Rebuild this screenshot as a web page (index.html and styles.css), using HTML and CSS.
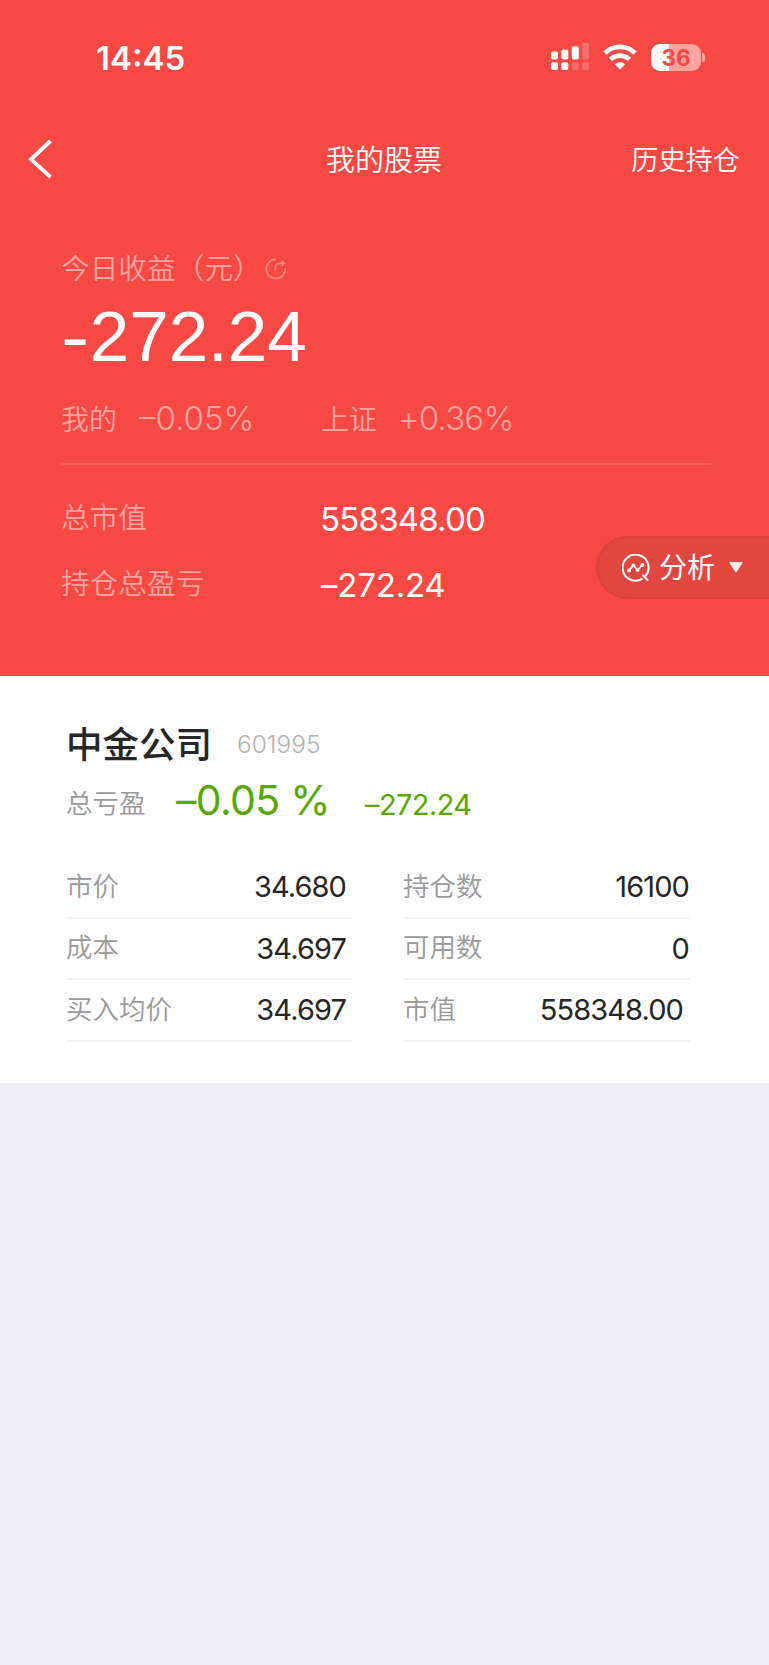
FILE: index.html
```html
<!DOCTYPE html>
<html lang="zh-CN">
<head>
    <meta charset="UTF-8">
    <meta name="viewport" content="width=device-width, initial-scale=1.0">
    <title>我的股票</title>
    <link rel="stylesheet" href="styles.css">
</head>
<body>
    <div class="hero">
        <!-- Status bar -->
        <div class="status-bar">
            <span class="time">14:45</span>
            <svg class="signal" width="38" height="28" viewBox="0 0 38 28" fill="#fff">
                <rect x="0" y="8.5" width="7" height="8" rx="2"/>
                <rect x="10.3" y="6.5" width="7" height="10" rx="2"/>
                <rect x="20.8" y="3.3" width="7" height="13.2" rx="2"/>
                <rect x="31" y="0" width="7" height="16.5" rx="2" opacity=".2"/>
                <rect x="0" y="19.3" width="7" height="7.6" rx="2"/>
                <rect x="10.3" y="19.3" width="7" height="7.6" rx="2"/>
                <rect x="20.8" y="19.3" width="7" height="7.6" rx="2" opacity=".2"/>
                <rect x="31" y="19.3" width="7" height="7.6" rx="2" opacity=".2"/>
            </svg>
            <svg class="wifi" width="34" height="26" viewBox="0 0 34 26" fill="none" stroke="#fff" stroke-width="4.8">
                <path d="M2 9.100a21.400 21.400 0 0 1 30 0"/>
                <path d="M7.500 15.400a13.600 13.600 0 0 1 19 0"/>
                <path d="M17 25.500l-5.200-5.300a7.600 7.600 0 0 1 10.400 0z" fill="#fff" stroke="none"/>
            </svg>
            <div class="battery">
                <div class="battery-body">36</div>
                <div class="battery-cap"></div>
            </div>
        </div>

        <!-- Nav -->
        <div class="nav">
            <svg class="back" width="26" height="40" viewBox="0 0 26 40" fill="none" stroke="#fff" stroke-width="3.8">
                <path d="M23.500 2L4 20.300 23.500 38"/>
            </svg>
            <h1 class="nav-title">我的股票</h1>
            <a class="nav-link">历史持仓</a>
        </div>

        <!-- Summary -->
        <div class="summary">
            <div class="today">
                <span>今日收益（元）</span>
                <svg width="22" height="22" viewBox="0 0 22 22" fill="none" stroke="#fff" stroke-width="1.6" opacity=".36">
                    <path d="M10.500 1.400a9.600 9.600 0 1 0 9.900 8.600"/>
                    <path d="M10.500 12.500V9.500q0-4 4-4h3.600"/>
                    <path d="M16.500 3l2.800 2.500-2.800 2.500"/>
                </svg>
            </div>
            <div class="amount"><span class="minus">-</span>272.24</div>
            <div class="compare">
                <div class="compare-item"><span class="compare-label">我的</span><span class="num neg">–0.05%</span></div>
                <div class="compare-item"><span class="compare-label">上证</span><span class="num">+0.36%</span></div>
            </div>
            <div class="total-row"><span class="total-label">总市值</span><span class="num">558348.00</span></div>
            <div class="total-row"><span class="total-label">持仓总盈亏</span><span class="num neg">–272.24</span></div>
        </div>

        <div class="analysis">
            <svg width="28" height="28" viewBox="0 0 28 28" fill="none" stroke="#fff" stroke-width="2">
                <path d="M20.600 24.600a13 13 0 1 1 2.500-2.100M20.500 20.800l5.700 5.700"/>
                <path d="M7 16.500l4.400-5.200 4.200 5 4.800-5.400" stroke-width="1.7"/>
                <g fill="#fff" stroke="none"><circle cx="7" cy="16.5" r="2"/><circle cx="11.4" cy="11.3" r="1.8"/><circle cx="15.6" cy="16.3" r="1.8"/><circle cx="20.4" cy="11" r="2"/></g>
            </svg>
            <span class="analysis-text">分析</span>
            <svg class="caret" width="14" height="11" viewBox="0 0 14 11" fill="#fff" opacity=".9"><path d="M1 0h12q1 0 .5 1L7.600 10q-.6.800-1.200 0L.5 1Q0 0 1 0z"/></svg>
        </div>
    </div>

    <!-- Stock card -->
    <div class="card">
        <div class="stock-head">
            <h2 class="stock-name">中金公司</h2>
            <span class="stock-code">601995</span>
        </div>
        <div class="profit">
            <span class="profit-label">总亏盈</span>
            <span class="profit-rate">–0.05 %</span>
            <span class="profit-value">–272.24</span>
        </div>
        <div class="grid">
            <div class="cell"><span class="label">市价</span><span class="value">34.680</span></div>
            <div class="cell right"><span class="label">持仓数</span><span class="value">16100</span></div>
            <div class="cell"><span class="label">成本</span><span class="value">34.697</span></div>
            <div class="cell right"><span class="label">可用数</span><span class="value">0</span></div>
            <div class="cell"><span class="label">买入均价</span><span class="value">34.697</span></div>
            <div class="cell right wide"><span class="label">市值</span><span class="value">558348.00</span></div>
        </div>
    </div>
</body>
</html>
```
FILE: styles.css
```css
* {
    margin: 0;
    padding: 0;
    box-sizing: border-box;
}

body {
    width: 769px;
    min-height: 1665px;
    background-color: #efeef4;
    font-family: Inter, "Noto Sans CJK SC", sans-serif;
    font-weight: 350;
    color: #262626;
}

.hero {
    position: relative;
    height: 676px;
    background-color: #f74944;
    color: #fff;
}

/* Status bar */
.status-bar {
    display: flex;
    align-items: center;
    height: 114px;
    padding: 0 64px 0 96px;
}

.time {
    flex: 1;
    padding-top: 1px;
    font-size: 33px;
    font-weight: 600;
}

.signal {
    margin-right: 14px;
}

.wifi {
    margin-right: 14px;
}

.battery {
    display: flex;
    align-items: center;
    gap: 1px;
}

.battery-body {
    width: 50px;
    height: 27px;
    border-radius: 9px;
    background: linear-gradient(90deg, #fff 36%, #fda4a1 36%);
    color: #f74944;
    font-size: 22.500px;
    font-weight: 700;
    line-height: 28px;
    text-align: center;
}

.battery-cap {
    width: 3px;
    height: 9px;
    border-radius: 0 3px 3px 0;
    background-color: #fda4a1;
}

/* Nav */
.nav {
    display: grid;
    grid-template-columns: 1fr auto 1fr;
    align-items: center;
    height: 90px;
    padding: 0 28px 0 27px;
}

.nav-title {
    padding-bottom: 2px;
    font-size: 29px;
    font-weight: 350;
}

.nav-link {
    justify-self: end;
    padding: 0 1px 2px 0;
    font-size: 27.200px;
}

/* Summary */
.summary {
    padding: 42px 58px 0 61px;
}

.today {
    display: flex;
    align-items: center;
    gap: 3px;
    height: 40px;
    font-size: 28.700px;
    color: #fda4a1;
}

.today svg {
    margin-top: 5px;
}

.amount {
    height: 90px;
    font-family: "Liberation Sans", Arial, sans-serif;
    font-size: 71px;
    font-weight: 400;
    line-height: 102px;
}

.minus {
    display: inline-block;
    margin-right: 5px;
    transform: scaleX(1.2);
    transform-origin: left;
}

.compare {
    display: flex;
    height: 89px;
    padding-top: 18px;
    border-bottom: 2px solid #f95d57;
    color: #fda4a1;
}

.compare-item {
    display: flex;
    width: 260px;
    height: 48px;
    align-items: center;
    gap: 21px;
}

.compare-label {
    font-size: 28px;
}

.num {
    font-size: 33px;
    letter-spacing: -0.8px;
}

.num.neg {
    padding-left: 1px;
    letter-spacing: 0;
}

.total-row {
    display: flex;
    align-items: center;
    height: 66px;
}

.compare + .total-row {
    margin-top: 21px;
}

.total-label {
    width: 259px;
    padding-bottom: 7px;
    font-size: 28.700px;
    color: #fda4a1;
}

.total-row .num {
    font-weight: 400;
}

.total-row .neg {
    letter-spacing: -0.2px;
}

/* Floating button on the right edge */
.analysis {
    position: absolute;
    top: 536px;
    right: 0;
    display: flex;
    align-items: center;
    width: 173px;
    height: 63px;
    padding-left: 24px;
    border: 2px solid #da423d;
    border-right: 0;
    border-radius: 32px 0 0 32px;
    background-color: #df473f;
    font-size: 28px;
}

.analysis-text {
    margin: 0 14px 0 9px;
    padding-bottom: 3px;
    font-weight: 400;
}

/* Stock card */
.card {
    height: 407px;
    padding: 38px 79px 0 66px;
    background-color: #fff;
}

.stock-head {
    display: flex;
    align-items: center;
    gap: 25px;
    height: 60px;
}

.stock-name {
    padding-bottom: 4px;
    font-size: 36.500px;
    font-weight: 500;
}

.stock-code {
    font-size: 24.500px;
    font-weight: 300;
    color: #b2b2b2;
}

.profit {
    display: flex;
    align-items: baseline;
    height: 80px;
    padding-top: 1px;
    color: #56a800;
}

.profit-label {
    align-self: flex-start;
    width: 110px;
    padding-top: 7px;
    font-size: 26.500px;
    color: #999;
}

.profit-rate {
    width: 189px;
    font-size: 41px;
    font-weight: 400;
    letter-spacing: -0.7px;
}

.profit-value {
    padding-top: 1px;
    font-size: 29px;
    font-weight: 400;
    letter-spacing: -0.6px;
}

.grid {
    display: grid;
    grid-template-columns: 287px 287px;
    column-gap: 50px;
    padding-top: 3px;
}

.cell {
    display: flex;
    justify-content: space-between;
    align-items: center;
    height: 61.500px;
    padding-right: 7px;
    border-bottom: 2px solid #f4f4f4;
}

.cell.right {
    padding-right: 1px;
}

.cell.wide {
    padding-right: 7px;
}

.label {
    padding-bottom: 5px;
    font-size: 26.500px;
    color: #999;
}

.value {
    font-size: 29px;
    font-weight: 400;
    letter-spacing: -0.9px;
}
```
